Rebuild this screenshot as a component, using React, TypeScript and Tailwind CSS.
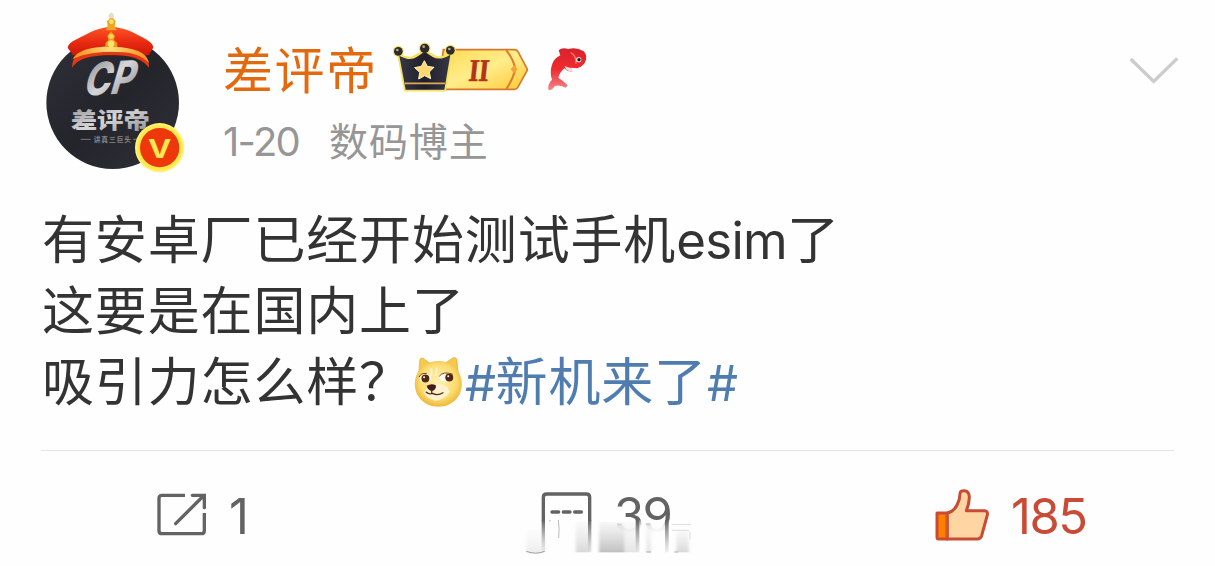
import { ReactNode } from 'react';

const post = {
  author: '差评帝',
  date: '1-20',
  role: '数码博主',
  question: '吸引力怎么样？',
  topic: '新机来了',
  reposts: 1,
  comments: 39,
  likes: 185,
};

const cjk = "font-['Inter','Noto_Sans_CJK_SC',sans-serif]";

function Avatar() {
  return (
    <svg viewBox="0 0 480 510" className="w-[160px] h-[170px] shrink-0">
      <defs>
        <linearGradient id="disc" x1="0" y1="0" x2="1" y2="1">
          <stop offset="0" stopColor="#303139" />
          <stop offset="0.5" stopColor="#24252b" />
          <stop offset="1" stopColor="#303139" />
        </linearGradient>
        <linearGradient id="steel" x1="0" y1="0" x2="1" y2="1">
          <stop offset="0" stopColor="#8a8a8f" />
          <stop offset="0.5" stopColor="#d6d6d8" />
          <stop offset="1" stopColor="#85858a" />
        </linearGradient>
        <linearGradient id="hat" x1="0" y1="0" x2="0" y2="1">
          <stop offset="0" stopColor="#ff5426" />
          <stop offset="0.6" stopColor="#e5280f" />
          <stop offset="1" stopColor="#cc170b" />
        </linearGradient>
        <linearGradient id="gold" x1="0" y1="0" x2="1" y2="0">
          <stop offset="0" stopColor="#f58a1c" />
          <stop offset="0.5" stopColor="#ffe07a" />
          <stop offset="1" stopColor="#f58a1c" />
        </linearGradient>
      </defs>
      <circle cx="233" cy="293" r="199" fill="url(#disc)" />
      <text transform="translate(141 272) skewX(-19) rotate(-3)" textLength="148" lengthAdjust="spacingAndGlyphs" fontSize="138" fill="url(#steel)" className="font-['Inter'] font-extrabold">CP</text>
      <text x="107" y="370" textLength="238" lengthAdjust="spacingAndGlyphs" fontSize="66" fill="url(#steel)" className="font-['Noto_Sans_CJK_SC'] font-black">差评帝</text>
      <path d="M137 403h30M294 403h12" stroke="#77777c" strokeWidth="3" />
      <text x="176" y="412" textLength="112" fontSize="20" fill="#86868a" className="font-['Noto_Sans_CJK_SC'] font-bold">讲真三巨头</text>

      {/* hat */}
      <path d="M98 127C103 112 118 107 136 97C166 81 187 69 229 65C271 69 294 81 322 97C340 107 352 113 355 127C352 136 345 141 342 151H113C111 141 101 137 98 127Z" fill="url(#hat)" />
      <path d="M111 188C112 157 129 139 166 130C205 122 254 122 293 132C326 141 344 160 342 188C323 165 302 157 273 153C244 149 207 149 178 154C150 158 127 165 111 188Z" fill="#e53713" />
      <path d="M113 163C122 145 143 135 169 130C206 122 254 122 289 132C319 139 337 151 342 174C318 151 293 144 263 142C234 139 209 140 183 143C154 147 133 151 113 163Z" fill="url(#gold)" />
      <path d="M229 22L236 42L242 49L239 63L245 76H213L218 63L216 49L223 42Z" fill="#efa51f" />
      <circle cx="229" cy="32" r="8" fill="#e9dcc0" />
      <circle cx="229" cy="50" r="7" fill="#ffe36b" />
      <path d="M228 79L240 92L237 105L247 115V126H211V115L220 105L217 92Z" fill="#f7941c" />
      <circle cx="228" cy="94" r="8" fill="#ffd34e" />
      <circle cx="228" cy="116" r="10" fill="#ffe36b" />

      <circle cx="374" cy="428" r="74" fill="#fff27a" />
      <circle cx="374" cy="428" r="69" fill="#ffe94d" />
      <circle cx="374" cy="428" r="59" fill="#ee380c" />
      <text x="374" y="458" textAnchor="middle" textLength="70" lengthAdjust="spacingAndGlyphs" fontSize="78" fill="#ffe750" className="font-['Inter'] font-bold">V</text>
    </svg>
  );
}

function VipBadge() {
  return (
    <svg viewBox="0 0 630 195" className="w-[210px] h-[65px] shrink-0">
      <defs>
        <linearGradient id="band" x1="0" y1="0" x2="1" y2="1">
          <stop offset="0" stopColor="#ffd94f" />
          <stop offset="0.5" stopColor="#ffed8c" />
          <stop offset="1" stopColor="#ffc935" />
        </linearGradient>
        <linearGradient id="crown" x1="0" y1="0" x2="1" y2="0">
          <stop offset="0" stopColor="#363745" />
          <stop offset="0.5" stopColor="#20202a" />
          <stop offset="1" stopColor="#363745" />
        </linearGradient>
        <linearGradient id="fish" x1="0" y1="0" x2="0" y2="1">
          <stop offset="0" stopColor="#d9222b" />
          <stop offset="0.5" stopColor="#ef2a30" />
          <stop offset="1" stopColor="#f4868a" />
        </linearGradient>
      </defs>
      <path d="M175 44H388Q395 44 399 50L425 99Q429 104 425 109L398 158Q395 163 388 163H160Z" fill="url(#band)" stroke="#d57a2d" strokeWidth="5" />
      <path d="M364 46Q386 74 391 103Q384 132 364 162" fill="none" stroke="#dc7a2e" strokeWidth="6" />
      <path d="M377 103L387 91L397 103L387 115Z" fill="#f6a13d" />
      <text transform="translate(249 137) skewX(-6)" textLength="60" lengthAdjust="spacingAndGlyphs" fontSize="95" fill="#b4321a" stroke="#b4321a" strokeWidth="2" className="font-['Liberation_Serif'] font-bold">II</text>
      <g stroke="#f6df62" strokeWidth="11" strokeLinejoin="round" fill="#f6df62">
        <path d="M43 62Q76 78 91 65L119 50L147 65Q165 77 196 59L178 164H62Z" />
        <circle cx="40" cy="49" r="11" />
        <circle cx="119" cy="40" r="12" />
        <circle cx="196" cy="46" r="11" />
      </g>
      <path d="M43 62Q76 80 95 66L119 50L143 66Q165 78 196 59L178 164H62Z" fill="url(#crown)" />
      <g fill="#2b2a2c">
        <circle cx="40" cy="49" r="13" />
        <circle cx="119" cy="40" r="14" />
        <circle cx="196" cy="46" r="13" />
      </g>
      <g fill="#b8aa83">
        <circle cx="37" cy="45" r="4" />
        <circle cx="116" cy="35" r="4" />
        <circle cx="193" cy="42" r="4" />
      </g>
      <path d="M60 145H180" stroke="#e0a956" strokeWidth="5" />
      <path d="M118 77L127 94L147 97L133 111L137 131L119 122L101 132L104 112L89 98L109 94Z" fill="#ffd774" stroke="#fff0bc" strokeWidth="3" />

      {/* koi */}
      <path d="M521 46Q531 36 550 42Q574 35 596 49Q606 59 603 74Q598 93 576 100L558 98L562 109Q548 112 538 100Q524 112 520 128Q532 135 548 151L542 158Q523 148 509 153Q502 166 491 166Q486 149 501 134Q493 111 502 86Q508 70 526 61Z" fill="url(#fish)" />
      <path d="M539 93Q552 98 562 100L560 101L562 110Q545 112 539 93Z" fill="#fbdada" />
      <path d="M557 53Q574 61 573 86" fill="none" stroke="#fa7770" strokeWidth="4" />
      <circle cx="581" cy="74" r="8" fill="#eadbd4" />
      <circle cx="582" cy="74" r="5" fill="#1f1517" />
    </svg>
  );
}

function Doge() {
  return (
    <svg viewBox="40 30 150 160" className="w-[50px] h-[53px] shrink-0">
      <defs>
        <radialGradient id="face" cx="0.5" cy="0.45" r="0.58">
          <stop offset="0" stopColor="#fff1b2" />
          <stop offset="0.65" stopColor="#fbdd72" />
          <stop offset="1" stopColor="#ecb02e" />
        </radialGradient>
      </defs>
      <path d="M57 82L60 42Q62 34 70 37L92 53ZM176 82L172 40Q168 32 159 36L138 51Z" fill="#f5c94e" stroke="#e2a52c" strokeWidth="2" />
      <path d="M116 45C157 45 187 75 187 114C187 154 157 183 116 183C75 183 45 154 45 114C45 75 75 45 116 45Z" fill="url(#face)" />
      <path d="M73 141Q90 107 109 117Q137 109 151 137Q134 164 107 165Q83 160 73 141Z" fill="#fff2cf" />
      <path d="M95 67V91M111 65L109 90" stroke="#fff2c4" strokeWidth="7" />
      <ellipse cx="77" cy="97" rx="17" ry="14" fill="#fffdf3" />
      <ellipse cx="140" cy="94" rx="21" ry="14" fill="#fffdf3" />
      <circle cx="77" cy="98" r="12" fill="#54250f" />
      <circle cx="149" cy="95" r="12" fill="#54250f" />
      <circle cx="73" cy="94" r="3" fill="#fff" />
      <circle cx="146" cy="91" r="3" fill="#fff" />
      <path d="M58 94Q63 80 81 83M119 91Q130 75 159 85" fill="none" stroke="#76400f" strokeWidth="3" />
      <path d="M81 120Q96 111 109 119Q109 133 96 136Q82 132 81 120Z" fill="#421d17" />
      <path d="M96 134V143M79 139Q88 147 98 143Q114 151 130 141" fill="none" stroke="#5d2811" strokeWidth="4" strokeLinecap="round" />
    </svg>
  );
}

function ActionCount({ className, children }: { className: string; children: ReactNode }) {
  return (
    <span className={`font-['Inter'] leading-[60px] whitespace-nowrap ${className}`}>
      {children}
    </span>
  );
}

export default function App() {
  return (
    <div className={`w-[1215px] h-[566px] overflow-hidden bg-[#fefefe] text-[#333] ${cjk}`}>
      <header className="flex h-[200px] pt-[5px] pl-[35px]">
        <Avatar />
        <div className="ml-7 flex-1">
          <div className="flex h-[100px] items-start">
            <h1 className="w-[162px] pt-[30px] text-[50px] leading-[72px] tracking-[1.6px] font-normal text-[#e3690f] whitespace-nowrap">{post.author}</h1>
            <div className="mt-[30px]"><VipBadge /></div>
            <svg viewBox="0 0 315 180" className="mt-[35px] ml-auto w-[105px] h-[60px]">
              <path d="M62 57L131 124L202 55" fill="none" stroke="#ccc" strokeWidth="10" />
            </svg>
          </div>
          <div className="mt-[7px] flex h-[60px] items-center text-[39px] leading-[60px] text-[#969696]">
            <span className="w-[106px] text-[40px] tracking-[-1.7px]">{post.date}</span>
            <span className="tracking-[0.9px]">{post.role}</span>
          </div>
        </div>
      </header>

      <main className="h-[250px] pt-[5px] pl-[42px] text-[52px] leading-[71px] tracking-[0.85px] whitespace-nowrap">
        <p className="h-[71px]">
          有安卓厂已经开始测试手机<span className="text-[51px] tracking-[-0.7px]">esim</span>了
        </p>
        <p className="h-[71px]">这要是在国内上了</p>
        <p className="flex h-[71px] items-center">
          <span className="w-[371px]">{post.question}</span>
          <Doge />
          <a className="ml-[2px] text-[#507daf]">
            <span className="text-[49px] tracking-[-0.5px]">#</span>
            {post.topic}
            <span className="text-[49px]">#</span>
          </a>
        </p>
      </main>

      <footer className="mx-[41px] flex h-[116px] w-[1133px] items-start border-t border-[#e3e3e3]">
        <div className="flex w-[360px] items-center pt-[34px] pl-[99px]">
          <svg viewBox="0 0 240 210" className="w-[80px] h-[70px] -my-[5px]" fill="none" stroke="#636363" strokeWidth="10">
            <path d="M135 43H66Q57 43 57 52V149Q57 158 66 158H184Q193 158 193 149V96" />
            <path d="M107 128L190 45M157 43H193V80" strokeLinecap="round" />
          </svg>
          <ActionCount className="mt-[2px] ml-[9px] text-[49px] text-[#636363]">{post.reposts}</ActionCount>
        </div>

        <div className="relative flex h-[115px] w-[420px] items-start pt-[29px] pl-[104px]">
          <svg viewBox="0 0 300 210" className="w-[100px] h-[70px]" fill="none" stroke="#636363" strokeWidth="10">
            <path d="M115 124V52Q115 42 125 42H244Q254 42 254 52V124" />
            <path d="M141 96H161M175 96H195M209 96H229" strokeLinecap="round" />
          </svg>
          <ActionCount className="mt-[6px] ml-[9px] text-[49px] tracking-[-1.7px] text-[#636363]">{post.comments}</ActionCount>
          {/* washed-out strip under the counter */}
          <svg viewBox="0 120 600 138" className="absolute left-[104px] top-[69px] w-[200px] h-[46px]">
            <defs>
              <linearGradient id="wash" x1="0" y1="0" x2="0" y2="1">
                <stop offset="0" stopColor="#fefefe" stopOpacity="0.25" />
                <stop offset="0.15" stopColor="#fefefe" stopOpacity="0.9" />
                <stop offset="0.3" stopColor="#fefefe" />
              </linearGradient>
              <linearGradient id="smear" x1="0" y1="0" x2="0" y2="1">
                <stop offset="0" stopColor="#ccc" stopOpacity="0.15" />
                <stop offset="1" stopColor="#b4b4b4" stopOpacity="0.85" />
              </linearGradient>
              <linearGradient id="drip" x1="0" y1="0" x2="0" y2="1">
                <stop offset="0" stopColor="#636363" />
                <stop offset="0.5" stopColor="#999" stopOpacity="0.7" />
                <stop offset="1" stopColor="#ccc" stopOpacity="0.3" />
              </linearGradient>
              <filter id="soft" x="-20%" y="-20%" width="140%" height="140%">
                <feGaussianBlur stdDeviation="4 1" />
              </filter>
            </defs>
            <rect y="118" width="600" height="140" fill="url(#wash)" />
            <g filter="url(#soft)" fill="url(#smear)">
              <rect x="64" y="150" width="57" height="67" opacity="0.25" />
              <rect x="212" y="126" width="44" height="91" opacity="0.6" />
              <rect x="282" y="126" width="76" height="91" />
              <rect x="358" y="126" width="40" height="91" opacity="0.4" />
              <rect x="424" y="126" width="14" height="91" opacity="0.4" />
              <rect x="514" y="150" width="37" height="67" opacity="0.6" />
            </g>
            <g fill="url(#drip)">
              <rect x="110" y="120" width="10" height="92" />
              <rect x="249" y="120" width="10" height="95" />
              <rect x="392" y="120" width="11" height="97" />
              <rect x="480" y="120" width="11" height="97" />
            </g>
            <path d="M64 214Q92 225 119 214" fill="none" stroke="#999" strokeWidth="3" />
            <path d="M133 125Q139 110 160 120Q164 145 161 174" fill="#fefefe" stroke="#bbb" strokeWidth="3" />
            <path d="M424 216H438M508 216H520" stroke="#aaa" strokeWidth="3" />
            <path d="M500 134H558M500 151H552M555 155V179" fill="none" stroke="#ddd" strokeWidth="3" />
          </svg>
        </div>

        <div className="flex items-center pt-[33px] pl-[112px]">
          <svg viewBox="40 25 180 180" className="w-[60px] h-[60px]" strokeLinejoin="round">
            <path d="M52 106H83V184H57Q52 184 52 178Z" fill="#ff8000" stroke="#c94a35" strokeWidth="9" />
            <path d="M83 106Q101 103 112 82Q121 65 121 49Q121 38 135 39Q149 41 149 59Q148 81 140 99H196Q205 100 203 112L186 174Q183 184 173 184H83Z" fill="#ffd6a3" stroke="#c94a35" strokeWidth="9" />
            <path d="M80 110V180" stroke="#d85b20" strokeWidth="5" />
          </svg>
          <ActionCount className="mt-[3px] ml-[18px] text-[49px] tracking-[-1.5px] text-[#c94a35]">{post.likes}</ActionCount>
        </div>
      </footer>
    </div>
  );
}
